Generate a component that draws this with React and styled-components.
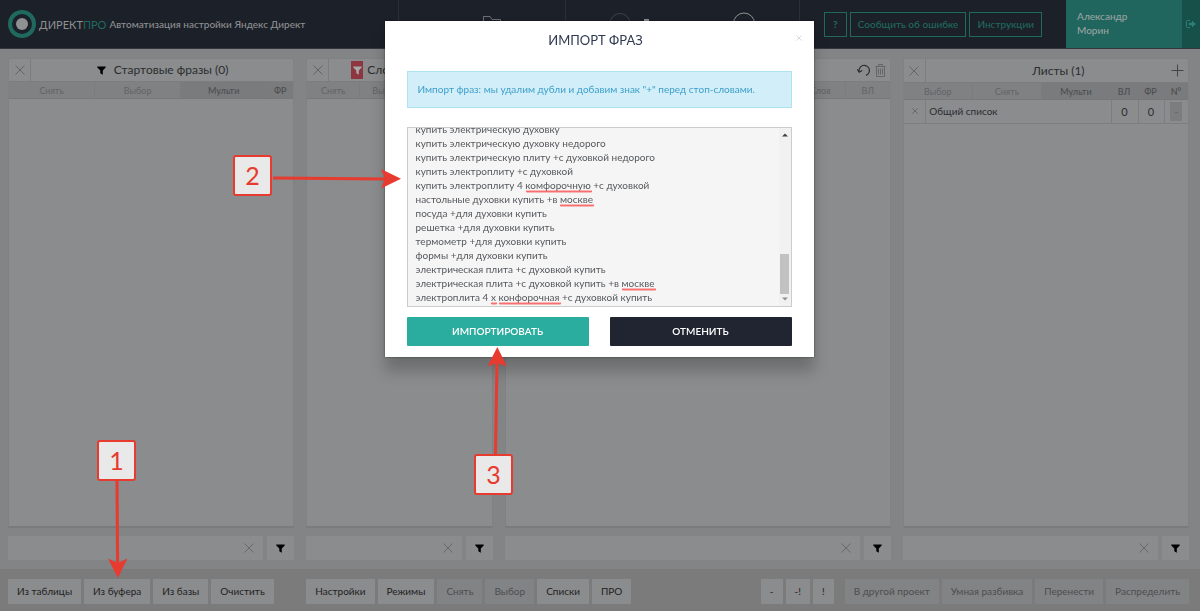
import React from "react";
import styled, { createGlobalStyle } from "styled-components";

const GlobalStyle = createGlobalStyle`
  * {
    box-sizing: border-box;
  }
  body {
    margin: 0;
    background: #828486;
    color: #2b2d30;
    font-family: Lato, "Open Sans", sans-serif;
    font-size: 10px;
  }
  button, input, textarea {
    font: inherit;
    color: inherit;
    margin: 0;
    padding: 0;
    border: 0;
    border-radius: 0;
    background: none;
  }
`;

const Page = styled.div`
  display: flex;
  flex-direction: column;
  min-height: 100vh;
`;

/* header */

const Header = styled.header`
  display: flex;
  height: 49px;
  background: #1c2028;
  border-bottom: 1px solid #33373e;
`;

const Brand = styled.div`
  display: flex;
  flex: 1;
  align-items: center;
  gap: 3px;
  padding-left: 8px;
  white-space: nowrap;
`;

const BrandName = styled.span`
  color: #8e9092;
  font-size: 11px;
`;

const Accent = styled.span`
  color: #1f695f;
`;

const Slogan = styled.span`
  color: #8e9092;
  font-weight: 500;
`;

const NavCell = styled.div`
  display: flex;
  align-items: flex-start;
  justify-content: center;
  width: ${(props) => props.$width}px;
  padding: 12px 0 0 ${(props) => props.$indent || 0}px;
  border-left: 1px solid #2b2f37;
`;

const Tools = styled.div`
  display: flex;
  align-items: center;
  gap: 3px;
  padding: 0 24px;
  border-left: 1px solid #2b2f37;
`;

const ToolButton = styled.button`
  height: 25px;
  padding: 0 ${(props) => (props.$bold ? 8 : 7)}px;
  border: 1px solid #1f695f;
  color: #1f695f;
  font-weight: ${(props) => (props.$bold ? 900 : 500)};
`;

const User = styled.div`
  width: 116px;
  padding: 9px 11px;
  background: #20665e;
  color: #9aa3a2;
  font-weight: 500;
  line-height: 14px;
`;

const Logout = styled.button`
  width: 18px;
  height: 48px;
  background: #175049;
  color: #2b8177;
`;

/* work area */

const Columns = styled.main`
  display: grid;
  flex: 1;
  grid-template-columns: minmax(0, 3fr) minmax(0, 2fr) minmax(0, 4fr) minmax(0, 3fr);
  padding: 9px 5px 9px 2px;
`;

const Column = styled.section`
  display: flex;
  flex-direction: column;
  gap: 8px;
  padding: 0 6px;
`;

const Panel = styled.div`
  display: flex;
  flex: 1;
  flex-direction: column;
  background: #8a8c8d;
  border: 1px solid #7f8182;
  border-bottom: 2px solid #797b7c;
`;

const PanelTop = styled.div`
  display: flex;
  height: ${(props) => (props.$tall ? 24 : 23)}px;
  border-bottom: 1px solid #7b7d7e;
`;

const CloseCell = styled.button`
  display: flex;
  align-items: center;
  justify-content: center;
  width: 22px;
  border-right: 1px solid #7b7d7e;
  color: #5f6162;
`;

const PanelTitle = styled.h2`
  display: flex;
  flex: 1;
  align-items: center;
  justify-content: ${(props) => (props.$start ? "flex-start" : "center")};
  gap: ${(props) => (props.$start ? 4 : 6)}px;
  margin: 0;
  padding-left: ${(props) => (props.$start ? 22 : 0)}px;
  font-size: 12px;
  font-weight: 400;
  line-height: 20px;
  white-space: nowrap;

  /* keeps the title centred when tools stand on the right */
  &:not(:last-child) {
    padding-left: 20px;
  }
`;

const FilterMark = styled.span`
  display: flex;
  align-items: center;
  justify-content: center;
  width: 12px;
  height: 18px;
  color: ${(props) => (props.$active ? "#a5a7a8" : "#000")};
  background: ${(props) => (props.$active ? "#8d3640" : "none")};
`;

const PanelTools = styled.div`
  display: flex;
  align-items: center;
  gap: 4px;
  padding-right: 4px;
`;

const IconButton = styled.button`
  display: flex;
  justify-content: center;
  color: ${(props) => (props.$faint ? "#646667" : "#2b2d30")};
`;

const Heads = styled.div`
  display: flex;
  justify-content: flex-end;
  height: 17px;
  background: #7f8182;
  border-bottom: 1px solid #767879;
`;

const Head = styled.button`
  flex: ${(props) => (props.$width ? `0 0 ${props.$width}px` : "1 1 0")};
  min-width: 0;
  border-right: 1px solid #7a7c7d;
  background: ${(props) => (props.$strong ? "#797b7c" : "none")};
  color: ${(props) => (props.$strong ? "#4c4e50" : "#626466")};
  font-size: 9px;
  font-weight: ${(props) => (props.$strong ? 500 : 400)};
  line-height: 15px;
  overflow: hidden;

  &:last-child {
    border-right: 0;
  }
`;

const ListTable = styled.table`
  width: 100%;
  border-collapse: collapse;
  table-layout: fixed;
`;

const Cell = styled.td`
  width: ${(props) => (props.$width ? `${props.$width}px` : "auto")};
  height: 23px;
  padding: 0 ${(props) => (props.$width ? 0 : 3)}px;
  border-right: 1px solid #7b7d7e;
  border-bottom: 1px solid #7b7d7e;
  font-size: ${(props) => (props.$width ? 11 : 10)}px;
  text-align: ${(props) => (props.$width ? "center" : "left")};

  &:last-child {
    border-right: 0;
  }
`;

const OrderButton = styled.button`
  display: block;
  width: 12px;
  height: 19px;
  margin: 0 auto;
  background: #7b7d7e;
  color: #666869;
`;

const FilterRow = styled.div`
  display: flex;
  gap: 4px;
`;

const FilterField = styled.div`
  display: flex;
  flex: 1;
  align-items: center;
  min-width: 0;
  height: 24px;
  padding-right: 9px;
  background: #8a8c8d;
`;

const FilterInput = styled.input`
  flex: 1;
  min-width: 0;
  height: 24px;
  padding: 0 6px;
`;

const FilterButton = styled.button`
  display: flex;
  flex: none;
  align-items: center;
  justify-content: center;
  width: 27px;
  background: #8a8c8d;
  color: #000;
`;

/* bottom bar */

const Footer = styled.footer`
  display: grid;
  grid-template-columns: minmax(0, 3fr) minmax(0, 9fr);
  height: 42px;
  padding: 10px 5px 0 2px;
  background: #7b7b7b;
`;

const FooterSide = styled.div`
  display: flex;
  justify-content: space-between;
  padding: 0 6px;
`;

const ButtonGroup = styled.div`
  display: flex;
  gap: ${(props) => props.$gap || 3}px;
`;

const BarButton = styled.button`
  height: 25px;
  padding: 0 9px 2px;
  background: ${(props) => (props.disabled ? "#818384" : "#8a8c8d")};
  color: ${(props) => (props.disabled ? "#4c4e50" : "#1f2123")};
  white-space: nowrap;
`;

/* dialog */

const Layer = styled.div`
  position: fixed;
  inset: 0;
  display: flex;
  align-items: flex-start;
  justify-content: center;
  padding: 21px 2px 0 0;
`;

const Dialog = styled.div`
  width: 429px;
  background: #fff;
  box-shadow: 0 14px 14px rgba(0, 0, 0, 0.22), 0 0 2px rgba(0, 0, 0, 0.5);
`;

const DialogTop = styled.div`
  display: flex;
  align-items: flex-start;
  height: 50px;
  padding: 9px 11px 0 12px;
`;

const DialogTitle = styled.h1`
  flex: 1;
  margin: 0;
  color: #2f3a50;
  font-size: 13px;
  font-weight: 400;
  line-height: 20px;
  text-align: center;
`;

const DialogClose = styled.button`
  width: 8px;
  height: 14px;
  color: #d5d7d9;
`;

const DialogBody = styled.div`
  padding: 0 22px 11px;
`;

const Note = styled.p`
  margin: 0 0 19px;
  padding: 0 10px;
  border: 1px solid #b0e3f2;
  background: #d1eef9;
  color: #3e9fcb;
  line-height: 35px;
`;

const PhraseBox = styled.div`
  display: flex;
  height: 180px;
  margin-bottom: 10px;
  border: 1px solid #ccc;
  background: #f5f5f5;
`;

/* shows the end of the list, the first row runs under the top edge */
const PhraseView = styled.div`
  position: relative;
  display: flex;
  flex: 1;
  align-items: flex-end;
  padding-bottom: 2px;
  overflow: hidden;
`;

const PhraseInput = styled.textarea`
  flex: 1;
  height: 182px;
  padding: 0 8px;
  color: #55585c;
  line-height: 14px;
  overflow: hidden;
  resize: none;
  white-space: pre;
  outline: 0;
`;

const Squiggle = styled.svg`
  position: absolute;
  bottom: ${(props) => 1 + props.$row * 14}px;
  left: ${(props) => props.$x}px;
`;

const Scrollbar = styled.div`
  display: flex;
  flex-direction: column;
  align-items: center;
  justify-content: space-between;
  width: 12px;
  padding: 5px 0;
  background: #f1f1f1;
`;

const Thumb = styled.div`
  width: 9px;
  height: 40px;
  margin: auto 0 3px;
  background: #c1c1c1;
`;

const Actions = styled.div`
  display: flex;
  gap: 21px;
`;

const ActionButton = styled.button`
  flex: 1;
  height: 29px;
  padding-bottom: 2px;
  border-radius: 1px;
  background: ${(props) => (props.$primary ? "#2aad9f" : "#202531")};
  color: #fff;
  font-weight: 600;
`;

/* step marks */

const Steps = styled.div`
  position: absolute;
  top: 0;
  left: 0;
  pointer-events: none;
`;

const StepMark = styled.div`
  position: absolute;
  top: ${(props) => props.$y}px;
  left: ${(props) => props.$x}px;
  width: 39px;
  height: 41px;
  border: 2px solid #e83b30;
  border-radius: 3px;
  background: #e9e9e9;
  color: #e83b30;
  font-size: 25px;
  line-height: 37px;
  text-align: center;
`;

const Cross = ({ size = 10 }) => (
  <svg width={size} height={size} viewBox="0 0 10 10" stroke="currentColor">
    <path d="M.5 .5 9.5 9.5M9.5 .5 .5 9.5" strokeWidth={9 / size} />
  </svg>
);

const Funnel = () => (
  <svg width="9" height="9" viewBox="0 0 9 9" fill="currentColor">
    <path d="M.3 .4H8.7V1.5L5.8 4.4V8.8L3.3 7.2V4.4L.3 1.5Z" />
  </svg>
);

const Logo = () => (
  <svg width="28" height="28" viewBox="0 0 28 28">
    <circle cx="14" cy="14" r="12" fill="none" stroke="#20695f" strokeWidth="4" />
    <circle cx="14" cy="14" r="6" fill="#8e9092" />
  </svg>
);

const FilterBar = ({ label }) => (
  <FilterRow>
    <FilterField>
      <FilterInput aria-label={label} />
      <IconButton $faint aria-label="Очистить фильтр">
        <Cross />
      </IconButton>
    </FilterField>
    <FilterButton aria-label="Фильтр">
      <Funnel />
    </FilterButton>
  </FilterRow>
);

const phrases = [
  "купить электрическую духовку",
  "купить электрическую духовку недорого",
  "купить электрическую плиту +с духовкой недорого",
  "купить электроплиту +с духовкой",
  "купить электроплиту 4 комфорочную +с духовкой",
  "настольные духовки купить +в москве",
  "посуда +для духовки купить",
  "решетка +для духовки купить",
  "термометр +для духовки купить",
  "формы +для духовки купить",
  "электрическая плита +с духовкой купить",
  "электрическая плита +с духовкой купить +в москве",
  "электроплита 4 х конфорочная +с духовкой купить",
];

// spelling marks, rows are counted from the last phrase
const typos = [
  { row: 8, x: 118, width: 66 },
  { row: 7, x: 152, width: 34 },
  { row: 1, x: 214, width: 34 },
  { row: 0, x: 83, width: 6 },
  { row: 0, x: 91, width: 62 },
];

const zigzag = (width) =>
  "M0 2.5" + Array.from({ length: width / 2 }, (_, i) => `L${i * 2 + 1} .5L${i * 2 + 2} 2.5`).join("");

const ImportDialog = () => (
  <Layer>
    <Dialog role="dialog" aria-labelledby="import-title">
      <DialogTop>
        <DialogTitle id="import-title">ИМПОРТ ФРАЗ</DialogTitle>
        <DialogClose aria-label="Закрыть">
          <Cross size={6} />
        </DialogClose>
      </DialogTop>
      <DialogBody>
        <Note>
          Импорт фраз: мы удалим дубли и добавим знак "+" перед стоп-словами.
        </Note>
        <PhraseBox>
          <PhraseView>
            <PhraseInput
              aria-label="Фразы"
              spellCheck={false}
              defaultValue={phrases.join("\n")}
            />
            {typos.map(({ row, x, width }) => (
              <Squiggle key={x} $row={row} $x={x} width={width} height="3">
                <path d={zigzag(width)} fill="none" stroke="#f33" strokeWidth=".7" />
              </Squiggle>
            ))}
          </PhraseView>
          <Scrollbar>
            <svg width="6" height="4" viewBox="0 0 6 4">
              <path d="M0 3.5 3 .5 6 3.5Z" fill="#404040" />
            </svg>
            <Thumb />
            <svg width="6" height="4" viewBox="0 0 6 4">
              <path d="M0 .5 3 3.5 6 .5Z" fill="#909090" />
            </svg>
          </Scrollbar>
        </PhraseBox>
        <Actions>
          <ActionButton $primary>ИМПОРТИРОВАТЬ</ActionButton>
          <ActionButton>ОТМЕНИТЬ</ActionButton>
        </Actions>
      </DialogBody>
    </Dialog>
  </Layer>
);

const StepArrows = () => (
  <svg width="520" height="590" viewBox="0 0 520 590" fill="#e83b30" stroke="#e83b30">
    <path d="M117 481 117.6 566M273 178 386 179M495.5 454 497 362" strokeWidth="3" />
    <g stroke="none">
      <path d="M117.8 578 108 558.5 117.8 563 127.5 558.5Z" />
      <path d="M401 178.7 381 169 385 178.7 381 188.5Z" />
      <path d="M497.3 347 487.5 366.5 497.3 363 507 366.5Z" />
    </g>
  </svg>
);

const App = () => (
  <>
    <GlobalStyle />
    <Page>
      <Header>
        <Brand>
          <Logo />
          <BrandName>
            ДИРЕКТ<Accent>ПРО</Accent>
          </BrandName>
          <Slogan>Автоматизация настройки Яндекс Директ</Slogan>
        </Brand>
        <NavCell $width={167} $indent={20}>
          <svg width="18" height="14" viewBox="0 0 18 14" fill="none" stroke="#6c6f73">
            <path d="M.5 13.5V4.5H7L9 7.5H17.5V13.5Z" />
          </svg>
        </NavCell>
        <NavCell $width={234}>
          <svg width="156" height="22" viewBox="0 0 156 22" fill="none">
            <circle cx="15" cy="11.5" r="10" stroke="#3d4147" />
            <path d="M39 8H44" stroke="#8e9092" strokeWidth="2" />
            <circle cx="139" cy="11.5" r="10.5" stroke="#8e9092" />
          </svg>
        </NavCell>
        <Tools>
          <ToolButton $bold>?</ToolButton>
          <ToolButton>Сообщить об ошибке</ToolButton>
          <ToolButton>Инструкции</ToolButton>
        </Tools>
        <User>
          Александр
          <br />
          Морин
        </User>
        <Logout aria-label="Выйти">
          <svg width="10" height="8" viewBox="0 0 10 8" fill="currentColor">
            <path d="M4 .5H1.5Q.5 .5 .5 1.5V6.5Q.5 7.5 1.5 7.5H4" fill="none" stroke="currentColor" />
            <path d="M3 2.8H6V.8L9.8 4 6 7.2V5.2H3Z" />
          </svg>
        </Logout>
      </Header>

      <Columns>
        <Column>
          <Panel>
            <PanelTop>
              <CloseCell aria-label="Закрыть">
                <Cross />
              </CloseCell>
              <PanelTitle>
                <FilterMark>
                  <Funnel />
                </FilterMark>
                Стартовые фразы (0)
              </PanelTitle>
            </PanelTop>
            <Heads>
              <Head>Снять</Head>
              <Head>Выбор</Head>
              <Head $strong>Мульти</Head>
              <Head $strong $width={26}>ФР</Head>
            </Heads>
          </Panel>
          <FilterBar label="Фильтр стартовых фраз" />
        </Column>

        <Column>
          <Panel>
            <PanelTop>
              <CloseCell aria-label="Закрыть">
                <Cross />
              </CloseCell>
              <PanelTitle $start>
                <FilterMark $active>
                  <Funnel />
                </FilterMark>
                Слова
              </PanelTitle>
            </PanelTop>
            <Heads>
              <Head>Снять</Head>
              <Head>Выбор</Head>
              <Head $strong aria-label="Мульти" />
              <Head $strong $width={26} aria-label="ФР" />
            </Heads>
          </Panel>
          <FilterBar label="Фильтр слов" />
        </Column>

        <Column>
          <Panel>
            <PanelTop>
              <PanelTitle />
              <PanelTools>
                <IconButton aria-label="Вернуть">
                  <svg width="14" height="13" viewBox="0 0 14 13" fill="none" stroke="currentColor" strokeWidth="1.2">
                    <path d="M2.2 7.8A5.2 5.2 0 1 1 9 11.4" />
                    <path d="M.3 5.3 2.2 8.2 5.2 6.4" />
                  </svg>
                </IconButton>
                <IconButton $faint aria-label="Удалить">
                  <svg width="11" height="13" viewBox="0 0 11 13" fill="none" stroke="currentColor">
                    <path d="M.5 2.5H10.5M3.5 2.5V.5H7.5V2.5M1.5 2.5V12.5H9.5V2.5M3.5 4.5V10.5M5.5 4.5V10.5M7.5 4.5V10.5" />
                  </svg>
                </IconButton>
              </PanelTools>
            </PanelTop>
            <Heads>
              <Head $width={50}>Слов</Head>
              <Head $width={44}>ВЛ</Head>
            </Heads>
          </Panel>
          <FilterBar label="Фильтр фраз" />
        </Column>

        <Column>
          <Panel>
            <PanelTop $tall>
              <CloseCell aria-label="Закрыть">
                <Cross />
              </CloseCell>
              <PanelTitle>Листы (1)</PanelTitle>
              <PanelTools>
                <IconButton aria-label="Добавить">
                  <svg width="13" height="13" viewBox="0 0 13 13" stroke="#434547">
                    <path d="M6.5 .5V12.5M.5 6.5H12.5" />
                  </svg>
                </IconButton>
              </PanelTools>
            </PanelTop>
            <Heads>
              <Head>Выбор</Head>
              <Head>Снять</Head>
              <Head $strong>Мульти</Head>
              <Head $strong $width={27}>ВЛ</Head>
              <Head $strong $width={26}>ФР</Head>
              <Head $strong $width={24}>N°</Head>
            </Heads>
            <ListTable>
              <tbody>
                <tr>
                  <Cell $width={22}>
                    <IconButton as="span" $faint>
                      <Cross size={6} />
                    </IconButton>
                  </Cell>
                  <Cell>Общий список</Cell>
                  <Cell $width={27}>0</Cell>
                  <Cell $width={26}>0</Cell>
                  <Cell $width={24}>
                    <OrderButton>-</OrderButton>
                  </Cell>
                </tr>
              </tbody>
            </ListTable>
          </Panel>
          <FilterBar label="Фильтр листов" />
        </Column>
      </Columns>

      <Footer>
        <FooterSide>
          <ButtonGroup>
            <BarButton>Из таблицы</BarButton>
            <BarButton>Из буфера</BarButton>
            <BarButton>Из базы</BarButton>
            <BarButton>Очистить</BarButton>
          </ButtonGroup>
        </FooterSide>
        <FooterSide>
          <ButtonGroup>
            <BarButton>Настройки</BarButton>
            <BarButton>Режимы</BarButton>
            <BarButton disabled>Снять</BarButton>
            <BarButton disabled>Выбор</BarButton>
            <BarButton>Списки</BarButton>
            <BarButton>ПРО</BarButton>
          </ButtonGroup>
          <ButtonGroup $gap={11}>
            <ButtonGroup>
              <BarButton>-</BarButton>
              <BarButton>-!</BarButton>
              <BarButton>!</BarButton>
            </ButtonGroup>
            <ButtonGroup>
              <BarButton disabled>В другой проект</BarButton>
              <BarButton disabled>Умная разбивка</BarButton>
              <BarButton disabled>Перенести</BarButton>
              <BarButton disabled>Распределить</BarButton>
            </ButtonGroup>
          </ButtonGroup>
        </FooterSide>
      </Footer>
    </Page>

    <ImportDialog />

    <Steps>
      <StepArrows />
      <StepMark $x={97} $y={440}>1</StepMark>
      <StepMark $x={233} $y={155}>2</StepMark>
      <StepMark $x={474} $y={454}>3</StepMark>
    </Steps>
  </>
);

export default App;
